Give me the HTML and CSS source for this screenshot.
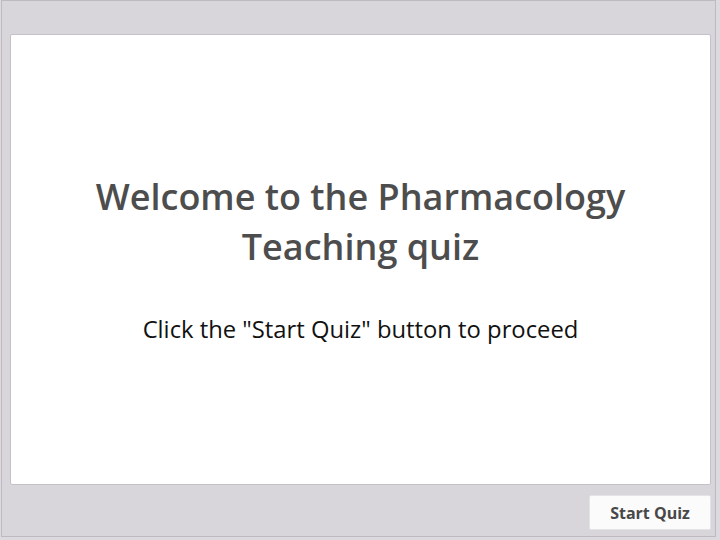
FILE: index.html
```html
<!DOCTYPE html>
<html>
<head>
<meta charset="utf-8">
<link rel="stylesheet" href="styles.css">
</head>
<body>
<div class="frame">
  <div class="panel">
    <h1 class="title">Welcome to the Pharmacology<br>Teaching quiz</h1>
    <p class="subtitle">Click the "Start Quiz" button to proceed</p>
  </div>
  <div class="footer">
    <button class="start">Start Quiz</button>
  </div>
</div>
</body>
</html>
```
FILE: styles.css
```css
html, body {
  margin: 0;
  padding: 0;
  width: 720px;
  height: 540px;
  overflow: hidden;
}
body {
  font-family: "Open Sans", sans-serif;
  background: #dcdadf;
}
.frame {
  box-sizing: border-box;
  width: 715px;
  height: 537px;
  margin-left: 1px;
  border: 1px solid #bdbbc1;
  background: #d8d6db;
  display: flex;
  flex-direction: column;
  padding: 33px 4px 6px 8px;
}
.panel {
  box-sizing: border-box;
  height: 451px;
  background: #fff;
  border: 1px solid #c4c2c8;
  border-radius: 2px;
  display: flex;
  flex-direction: column;
  align-items: center;
  justify-content: center;
  padding-bottom: 3px;
}
.title {
  margin: 0;
  font-size: 36px;
  font-weight: 600;
  line-height: 50px;
  color: #4d4d4d;
  text-align: center;
}
.subtitle {
  margin: 42px 0 0 0;
  font-size: 23.8px;
  line-height: 30px;
  color: #111;
}
.footer {
  display: flex;
  justify-content: flex-end;
  padding-top: 10px;
  margin-right: 0;
}
.start {
  box-sizing: border-box;
  width: 122px;
  height: 35px;
  background: #fbfbfb;
  border: 1px solid #e4e3e6;
  border-radius: 2px;
  font-family: "Open Sans", sans-serif;
  font-size: 16px;
  font-weight: 700;
  color: #484848;
  padding: 0;
}
```
